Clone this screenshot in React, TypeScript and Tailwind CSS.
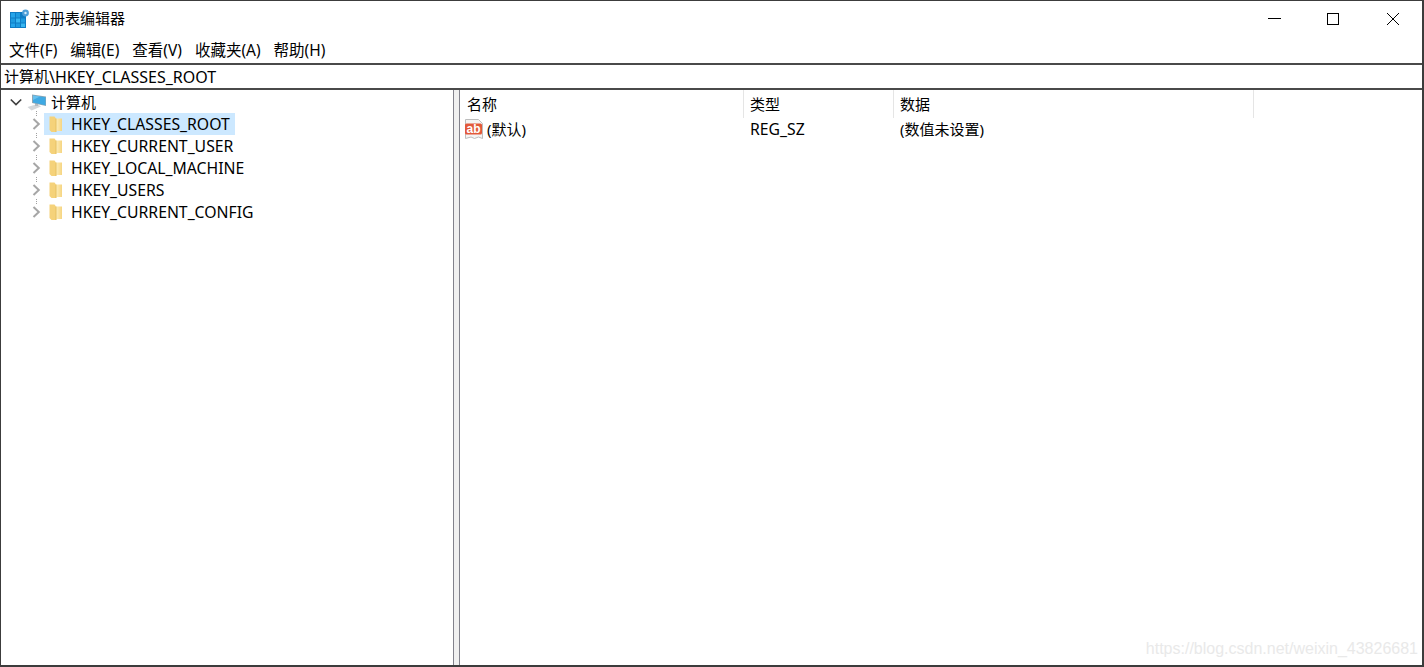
const font = "font-['Noto_Sans','Noto_Sans_CJK_SC',sans-serif]";

const menus = ['文件(F)', '编辑(E)', '查看(V)', '收藏夹(A)', '帮助(H)'];
const hives = ['HKEY_CLASSES_ROOT', 'HKEY_CURRENT_USER', 'HKEY_LOCAL_MACHINE', 'HKEY_USERS', 'HKEY_CURRENT_CONFIG'];

function RegeditIcon() {
  return (
    <svg width="20" height="20" viewBox="0 0 20 20" className="shrink-0">
      <rect x="0" y="3" width="16" height="16" fill="#0f7cc4" />
      <rect x="1" y="4" width="4" height="4.5" fill="#25a5ea" />
      <rect x="6" y="4" width="4" height="4.5" fill="#1e9be0" />
      <rect x="1" y="9.5" width="4" height="4" fill="#1e9be0" />
      <rect x="6" y="9.5" width="4" height="4" fill="#38b6f0" />
      <rect x="11" y="9.5" width="4" height="4" fill="#1e9be0" />
      <rect x="1" y="14.5" width="4" height="3.5" fill="#25a5ea" />
      <rect x="6" y="14.5" width="4" height="3.5" fill="#1e9be0" />
      <rect x="11" y="14.5" width="4" height="3.5" fill="#38b6f0" />
      <circle cx="15.5" cy="4" r="3.4" fill="#4f9fd8" />
      <circle cx="15.5" cy="4" r="1.2" fill="#d5ecfa" />
    </svg>
  );
}

function ComputerIcon() {
  return (
    <svg width="20" height="17" viewBox="0 0 20 17" className="shrink-0">
      <path d="M0.5 13 10.5 10 14 12.5 4.5 16.5z" fill="#d3d7da" />
      <path d="M8 9 11 9.5 11 12 8 12z" fill="#b5bbc0" />
      <path d="M5 0.5 19 2.5v9.5L5 9z" fill="#8fa6b3" />
      <path d="M6 1.5 18.5 3.2v8L6 8.5z" fill="#3fa9e3" />
      <path d="M6 1.5 13 2.5 6 6z" fill="#68c1ee" />
    </svg>
  );
}

function FolderIcon({ id }: { id: string }) {
  return (
    <svg width="13" height="16" viewBox="0 0 13 16" className="shrink-0">
      <defs>
        <linearGradient id={id} x1="0" x2="1" y1="0" y2="0">
          <stop offset="0" stopColor="#fdedb9" />
          <stop offset="1" stopColor="#f6d582" />
        </linearGradient>
      </defs>
      <path d="M0.5 0.5h5l1.5 2v13.5H2.5L0.5 14z" fill="#f5d27a" />
      <path d="M7 2.5h6V15H7z" fill={`url(#${id})`} />
      <path d="M7 2.5V16" stroke="#e6c162" strokeWidth="1" />
    </svg>
  );
}

function StringIcon() {
  return (
    <svg width="20" height="21" viewBox="0 0 20 21" className="shrink-0">
      <path d="M1.5 0.5h13l4 4v15l-4-1.5-4 1.5-3.5-1.5-5.5 1.5z" fill="#f4f4f4" stroke="#bdbdbd" />
      <rect x="1" y="4.5" width="17" height="11" rx="1.5" fill="#e2593a" />
      <text x="9.5" y="13.8" textAnchor="middle" fontSize="12" fontWeight="700" fill="#fff" fontFamily="Liberation Sans, sans-serif">ab</text>
    </svg>
  );
}

function Chevron({ open }: { open?: boolean }) {
  return (
    <svg width="12" height="12" viewBox="0 0 12 12" className="shrink-0">
      <path
        d={open ? 'M0.8 3.5 6 8.5 11.2 3.5' : 'M2.5 1 7.8 6 2.5 11'}
        fill="none"
        stroke={open ? '#404040' : '#a6a6a6'}
        strokeWidth={open ? 1.7 : 2}
      />
    </svg>
  );
}

export default function App() {
  return (
    <div className={`${font} relative flex flex-col h-[667px] w-[1424px] overflow-hidden bg-white border-t border-l border-r-2 border-b-2 border-[#3c3c3c] text-[15px] text-black`}>
      {/* title bar */}
      <div className="flex items-center h-[35px] pl-[9px] shrink-0">
        <RegeditIcon />
        <span className="ml-[5px]">注册表编辑器</span>
        <div className="ml-auto flex items-center">
          <div className="w-[58px] flex justify-center">
            <div className="w-[13px] h-px bg-black" />
          </div>
          <div className="w-[60px] flex justify-center">
            <div className="w-[12px] h-[12px] border border-black" />
          </div>
          <div className="w-[59px] flex justify-center">
            <svg width="14" height="14" viewBox="0 0 14 14">
              <path d="M1 1 13 13M13 1 1 13" stroke="#000" strokeWidth="1" />
            </svg>
          </div>
        </div>
      </div>

      {/* menu bar */}
      <div className="flex items-center h-[27px] pt-[2px] pl-[8px] gap-[13px] shrink-0 text-[15.5px]">
        {menus.map((m) => (
          <span key={m}>{m}</span>
        ))}
      </div>

      {/* address bar */}
      <div className="flex items-center h-[27px] pl-[3px] shrink-0 border-y-2 border-[#4a4a4a]">
        计算机<span className="text-[16px]">\HKEY_CLASSES_ROOT</span>
      </div>

      <div className="flex flex-1 min-h-0">
        {/* tree */}
        <div className="w-[452px] shrink-0 pt-px pl-[9px]">
          <div className="flex items-center h-[22px]">
            <Chevron open />
            <span className="ml-[5px]"><ComputerIcon /></span>
            <span className="ml-[4px]">计算机</span>
          </div>
          {hives.map((h, i) => (
            <div key={h} className="flex items-center h-[22px] pl-[21px]">
              <div className="relative">
                <Chevron />
                <div className="absolute left-[5px] -top-[7px] h-[5px] border-l border-dotted border-[#a0a0a0]" />
              </div>
              <div className={`flex items-center h-[22px] ml-px pl-[5px] pr-[5px] ${i === 0 ? 'bg-[#cce8ff]' : ''}`}>
                <FolderIcon id={`folder-${i}`} />
                <span className="ml-[9px] pt-[2px] text-[15.75px]">{h}</span>
              </div>
            </div>
          ))}
        </div>

        {/* splitter */}
        <div className="w-[7px] shrink-0 bg-[#f0f0f0] border-x border-[#82828c]" />

        {/* values */}
        <div className="flex-1 min-w-0">
          <div className="flex h-[28px]">
            <div className="w-[284px] pl-[7px] pt-[3px] border-r border-[#e5e5e5]">名称</div>
            <div className="w-[150px] pl-[6px] pt-[3px] border-r border-[#e5e5e5]">类型</div>
            <div className="w-[360px] pl-[6px] pt-[3px] border-r border-[#e5e5e5]">数据</div>
          </div>
          <div className="flex items-center h-[22px]">
            <div className="w-[284px] flex items-center pl-[4px]">
              <StringIcon />
              <span className="ml-[3px]">(默认)</span>
            </div>
            <div className="w-[150px] pl-[6px] pt-[2px] text-[15.75px]">REG_SZ</div>
            <div className="pl-[6px]">(数值未设置)</div>
          </div>
        </div>
      </div>

      {/* watermark */}
      <div className="absolute right-[4px] bottom-[4px] text-[16px] text-[#e9e9e9] font-['Liberation_Sans',sans-serif]">
        https://blog.csdn.net/weixin_43826681
      </div>
    </div>
  );
}
